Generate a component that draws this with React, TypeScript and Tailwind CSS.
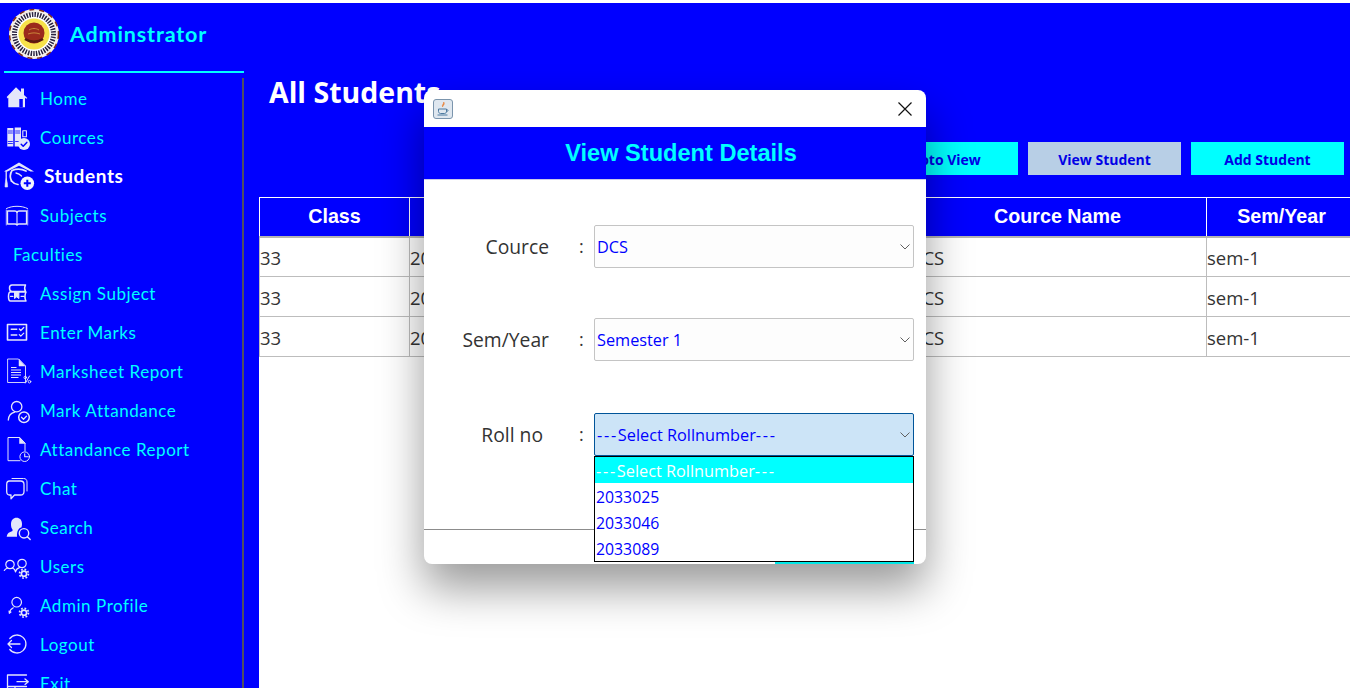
import React from "react";

const c = "#e4e6fb";
const B = "#0000ff";
const S = ({ children, w = 26, h = 26 }: { children: React.ReactNode; w?: number; h?: number }) => (
  <svg width={w} height={h} viewBox={`0 0 ${w} ${h}`} fill="none" stroke={c} strokeWidth={1.3} strokeLinecap="round" strokeLinejoin="round" className="shrink-0 overflow-visible">
    {children}
  </svg>
);
const Gear = ({ x, y }: { x: number; y: number }) => (
  <g>
    <circle cx={x} cy={y} r={2.6} strokeWidth={1.6} />
    <circle cx={x} cy={y} r={4.4} strokeDasharray="1.7 1.75" strokeWidth={1.8} strokeLinecap="butt" />
  </g>
);
const Home = () => (
  <S>
    <path d="M.7 11 10 1.300l5 4.700V2.500h3V9l3.300 3-1 .8-1.300-1V21.300H2.300V11.800l-.6.6z" fill={c} stroke="none" />
    <rect x={13.300} y={13} width={3.500} height={8.300} fill={B} stroke="none" />
  </S>
);
const Cources = () => (
  <S>
    <path d="M1.300 3h6v18.500h-6zM8.700 2.400h6.300V15l-2 6.500H8.700z" fill={c} stroke="none" />
    <path d="M1.800 6h5M1.800 8h5M1.800 16.500h5M1.800 18.500h5M9.200 6h5M9.200 8h5M9.200 16.500h4" stroke={B} strokeWidth={.8} strokeLinecap="butt" />
    <rect x={16.800} y={5.800} width={3.600} height={6} strokeWidth={1.100} />
    <circle cx={18} cy={19} r={6} fill={c} stroke="none" />
    <path d="m15.200 19.200 2 2 3.600-3.800" stroke={B} strokeWidth={1.500} />
  </S>
);
const Students = () => (
  <S w={30} h={30}>
    <path d="M0 9.500 15 .5l15 9h-3.500L15 3.800 3.500 9.500z" fill={c} stroke="none" />
    <path d="M2.200 9v10" strokeWidth={1.300} />
    <path d="M2.200 17c-.8 2.500-1.200 5-1.200 8h2.600c0-3-.4-5.500-1.400-8z" fill={c} strokeWidth={.6} />
    <path d="M7.500 19c-2-4-1-8 .5-10.500 5-2 9-2 14 .5" strokeWidth={1.700} />
    <path d="M7.500 19c1.500 2 3.500 3 6.500 3.500" strokeWidth={1.700} />
    <path d="M12 11c2 .5 4 1.500 5.500 3" strokeWidth={1.300} />
    <circle cx={23.300} cy={21.300} r={6.800} fill="#f2f3ff" stroke="none" />
    <path d="M23.300 17.800v7M19.800 21.300h7" stroke={B} strokeWidth={2} strokeLinecap="butt" />
  </S>
);
const Subjects = () => (
  <S>
    <path d="M1.500 8h7.500c1 0 1.700.6 2 1.500.3-.9 1-1.500 2-1.500h7.500v13H13c-1 0-1.700.3-2 1-.3-.7-1-1-2-1H1.500z" strokeWidth={1.300} />
    <path d="M11 9.500V22" strokeWidth={1.100} />
    <path d="M.5 5.500C6 2.500 16 2.500 21.500 5.500" strokeWidth={1} />
    <path d="M.3 7v15M21.700 7v15" strokeWidth={.8} />
  </S>
);
const Assign = () => (
  <S>
    <path d="M6 4h13.500M6 4C4 4 3.500 5.500 3.500 7S4 10.500 6 10.500h13.500M19.500 4c-1 1.800-1 4.500 0 6.500M4.500 11h15.500c-1.200 2.500-1.200 6.500 0 9M4.500 11c-1.500 0-2 1.800-2 4.500s.5 4.500 2 4.500h15.500" strokeWidth={1.500} />
    <path d="M8.500 10.500v7l2.200-1.700 2.200 1.700v-7" fill={c} strokeWidth={1} />
    <path d="M4.500 15.300h2.500M15 15.300h3" strokeWidth={1.200} />
  </S>
);
const Marks = () => (
  <S>
    <rect x={1.500} y={4.500} width={19} height={15.500} strokeWidth={1.600} />
    <path d="M4.700 9.300h6.600M4.700 15h6.600" strokeWidth={1.500} strokeLinecap="butt" />
    <path d="m13.300 9 1.500 1.500 3-3M13.300 14.700l1.500 1.500 3-3" strokeWidth={1.200} />
  </S>
);
const Sheet = () => (
  <S>
    <path d="M2 0h10.500l7 7v16.500H2z" strokeWidth={.9} />
    <path d="M13 .5V7h6z" fill={c} strokeWidth={.5} />
    <path d="M5 8.500h5.500M5 11h10M5 13.500h10M5 16h10M5 18.500h7.500" strokeWidth={1.100} strokeLinecap="butt" />
    <path d="m23.500 17-4 7" strokeWidth={1} />
    <circle cx={19.300} cy={18.500} r={1.300} strokeWidth={.9} />
    <circle cx={23.500} cy={22.700} r={1.300} strokeWidth={.9} />
  </S>
);
const Attend = () => (
  <S>
    <circle cx={10.700} cy={8.700} r={5.200} strokeWidth={1.300} />
    <path d="M2.300 22c.3-4.500 2.800-7 6.500-7.800" strokeWidth={1.300} />
    <circle cx={18} cy={19.300} r={5.300} strokeWidth={1.500} />
    <path d="m15.500 19.300 2 2 3-3.200" strokeWidth={1.300} />
  </S>
);
const Report = () => (
  <S>
    <path d="M14 23.700H2V.5h11.500L19 6v8" strokeWidth={1} />
    <path d="M13.500.5V6.500H19z" fill={c} strokeWidth={.5} />
    <circle cx={18.700} cy={19.700} r={4.800} strokeWidth={1} />
    <path d="M18.700 16.800v2.900h3.500" strokeWidth={1.100} />
  </S>
);
const Chat = () => (
  <S>
    <path d="M6 2.500h11.500c2.300 0 3.500 1.200 3.500 3.500v9" strokeWidth={1} />
    <path d="M3.500 5h11c2.300 0 3.500 1.200 3.500 3.500v7c0 2.300-1.200 3.500-3.500 3.500H8.500L5 22.800V19H3.500C1.700 19 .7 17.800.7 15.500v-7C.7 6.200 1.700 5 3.500 5z" strokeWidth={1.300} />
  </S>
);
const SearchI = () => (
  <S>
    <path d="M.7 21.700c.2-3 2.300-4.700 5.800-5.700v-1.500c-1-1-1.500-3-1.500-5C5 5 7.300 2.800 10.500 2.800S16 5 16 9c0 1-.1 1.800-.5 3.200-3 .9-4.800 4-4.500 9.500z" fill={c} stroke="none" />
    <circle cx={18} cy={18.300} r={4.700} strokeWidth={1.400} />
    <path d="m21.400 21.700 2.800 2.800" strokeWidth={1.400} />
  </S>
);
const Users = () => (
  <S>
    <circle cx={4} cy={10.500} r={4.200} strokeWidth={1.200} />
    <circle cx={16} cy={9.500} r={4.200} strokeWidth={1.200} />
    <path d="M-1.700 16.500c.6-1.300 1.800-2 3.300-2.500M6.500 14c1.500.5 2.600 1.800 3 4 .3-2 1.800-3.700 4-4.300" strokeWidth={1.200} />
    <Gear x={18} y={19.700} />
  </S>
);
const Admin = () => (
  <S>
    <circle cx={10.700} cy={9.200} r={4.800} strokeWidth={1.200} />
    <path d="M3.300 20.300c.5-2.800 1.800-4.500 4-5.500M3.300 20.300 3 18M3.300 20.300 5 19" strokeWidth={1.100} />
    <Gear x={18} y={19.700} />
  </S>
);
const Logout = () => (
  <S>
    <path d="M3.800 6.500A9 9 0 1 1 3.800 17.500" strokeWidth={1.300} />
    <path d="M2 12h12M5.500 8.500 2 12l3.500 3.500" strokeWidth={1.300} />
  </S>
);
const Exit = () => (
  <S>
    <path d="M20.500 4H1.500v14h12M1.500 15.500h19M9 15.500V20" strokeWidth={1.300} />
    <path d="M11 10.700h11M19 8l3.300 2.700-3.300 2.700" strokeWidth={1.300} />
  </S>
);

const menu: { label: string; icon: React.ReactNode }[] = [
  { label: "Home", icon: <Home /> },
  { label: "Cources", icon: <Cources /> },
];
const menu2: { label: string; icon: React.ReactNode }[] = [
  { label: "Assign Subject", icon: <Assign /> },
  { label: "Enter Marks", icon: <Marks /> },
  { label: "Marksheet Report", icon: <Sheet /> },
  { label: "Mark Attandance", icon: <Attend /> },
  { label: "Attandance Report", icon: <Report /> },
  { label: "Chat", icon: <Chat /> },
  { label: "Search", icon: <SearchI /> },
  { label: "Users", icon: <Users /> },
  { label: "Admin Profile", icon: <Admin /> },
  { label: "Logout", icon: <Logout /> },
  { label: "Exit", icon: <Exit /> },
];

const Item = ({ label, icon }: { label: string; icon: React.ReactNode }) => (
  <div className="flex h-[39px] shrink-0 items-center gap-2 pl-[6px] font-['Lato',sans-serif] text-[17px] tracking-[0.55px] text-[#00ffff]">
    <span className="flex w-[26px] shrink-0">{icon}</span>
    <span className="whitespace-nowrap">{label}</span>
  </div>
);

const Logo = () => (
  <svg width="52" height="52" viewBox="0 0 52 52" className="shrink-0">
    <circle cx="26" cy="26" r="25" fill="#f5efe6" />
    <circle cx="26" cy="26" r="24.500" fill="none" stroke="#7c2a1e" strokeWidth="1.500" strokeDasharray="5 5" />
    <circle cx="26" cy="26" r="22" fill="#fff" />
    <circle cx="26" cy="26" r="19.500" fill="none" stroke="#2b2440" strokeWidth="5" strokeDasharray="1.500 1.200" />
    <circle cx="26" cy="26" r="15.500" fill="#f7e24a" />
    <circle cx="26" cy="25" r="10.500" fill="#9b2a1c" />
    <path d="M17 31c5 3.500 13 3.500 18 0" stroke="#5a1a10" strokeWidth="2.500" fill="none" />
    <path d="M21 22c3-2 7-2 10 0M20 26c4-1.500 8-1.500 12 0" stroke="#c9843a" strokeWidth="1" fill="none" />
  </svg>
);

const JavaIcon = () => (
  <svg width="20" height="20" viewBox="0 0 20 20">
    <rect x="0.500" y="0.500" width="19" height="19" rx="2.500" fill="#dfe7ef" stroke="#7b95ad" />
    <path d="M10.500 3c1 1.500-2 2.500-1 5 .2-1.500 2.500-2.200 1.500-4.500z" fill="#e8833a" stroke="#e8833a" strokeWidth=".6" />
    <path d="M5.500 10h8v2.500c0 1-1 2-2 2h-4c-1 0-2-1-2-2zM13.500 10.500c2 0 2 2-.3 2.300M4.500 16h10" fill="none" stroke="#4d7aa0" strokeWidth="1" />
  </svg>
);

const Chevron = () => (
  <svg width="10" height="6" viewBox="0 0 10 6" className="shrink-0">
    <path d="M.5.500 5 5 9.500.500" fill="none" stroke="#606060" strokeWidth="1" />
  </svg>
);

const Dash = () => <span className="tracking-[1.7px]">---</span>;

const Combo = ({ label, value, active, pr }: { label: string; value: React.ReactNode; active?: boolean; pr: string }) => (
  <div className="flex h-[43px] items-center font-['Open_Sans',sans-serif]">
    <span className={`w-[125px] pt-[1px] text-right text-[19.300px] text-[#333] ${pr}`}>{label}</span>
    <span className="w-[45px] pl-[30px] text-[18px] text-[#333]">:</span>
    <div className={`flex h-full w-[320px] items-center justify-between rounded-[2px] border pl-[2px] pr-[3px] text-[16.300px] text-[#0000ff] ${active ? "border-[#005499] bg-[#cce4f7]" : "border-[#c4c4c4] bg-[#fdfdfd]"}`}>
      <span className="pt-[1px]">{value}</span>
      <Chevron />
    </div>
  </div>
);

const rows = ["2033025", "2033046", "2033089"];

export default function App() {
  return (
    <div className="relative flex h-[688px] w-[1350px] overflow-hidden bg-white pt-[3px]">
      <aside className="flex w-[259px] shrink-0 flex-col overflow-hidden bg-[#0000ff]">
        <div className="flex h-[68px] shrink-0 items-center gap-[10px] pb-[6px] pl-2">
          <Logo />
          <span className="font-['Lato',sans-serif] text-[21.500px] font-bold tracking-[0.85px] text-[#00ffff]">Adminstrator</span>
        </div>
        <div className="ml-1 h-[2px] w-[240px] shrink-0 bg-[#00ffff]" />
        <nav className="mt-[5px] flex w-[244px] flex-1 flex-col border-r-2 border-[#4f4f5f] pt-[1px]">
          {menu.map((m) => (
            <Item key={m.label} {...m} />
          ))}
          <div className="flex h-[39px] shrink-0 items-center gap-[10px] pl-1 font-['Lato',sans-serif] text-[19px] font-bold tracking-[0.6px] text-white">
            <Students />
            <span>Students</span>
          </div>
          <Item label="Subjects" icon={<Subjects />} />
          <div className="flex h-[39px] shrink-0 items-center pl-[13px] font-['Lato',sans-serif] text-[17px] tracking-[0.55px] text-[#00ffff]">Faculties</div>
          {menu2.map((m) => (
            <Item key={m.label} {...m} />
          ))}
        </nav>
      </aside>

      <main className="flex min-w-0 flex-1 flex-col">
        <div className="h-[194px] shrink-0 bg-[#0000ff] pl-[10px] pr-[6px] pt-[67px]">
          <h1 className="font-['Open_Sans',sans-serif] text-[28.500px] font-bold leading-[44px] text-white">All Students</h1>
          <div className="mt-[28px] flex justify-end gap-[10px] font-['Open_Sans',sans-serif] text-[14px] font-bold text-[#0000e6]">
            <button className="h-[33px] w-[153px] bg-[#00ffff] pt-[1px]">Photo View</button>
            <button className="h-[33px] w-[153px] bg-[#b8cfe6] pt-[1px]">View Student</button>
            <button className="h-[33px] w-[153px] bg-[#00ffff] pt-[1px]">Add Student</button>
          </div>
        </div>
        <table className="w-[1097px] shrink-0 table-fixed border-collapse">
          <colgroup>
            <col className="w-[150px]" />
            <col className="w-[250px]" />
            <col className="w-[249px]" />
            <col className="w-[298px]" />
            <col className="w-[150px]" />
          </colgroup>
          <thead>
            <tr className="h-[39px] border-t border-b-2 border-t-white border-b-[#b4b4b4] bg-[#0000ff] font-['Liberation_Sans',sans-serif] text-[19.700px] font-bold text-white">
              <th className="border-x border-white">Class</th>
              <th className="border-x border-white">Roll no</th>
              <th className="border-x border-white">Name</th>
              <th className="border-x border-white">Cource Name</th>
              <th className="border-x border-white">Sem/Year</th>
            </tr>
          </thead>
          <tbody className="font-['Open_Sans',sans-serif] text-[18.500px] text-[#333]">
            {rows.map((r) => (
              <tr key={r} className="h-[40px] border-b border-[#bdbdbd]">
                <td className="border-x border-[#bdbdbd] pt-[3px]">33</td>
                <td className="border-x border-[#bdbdbd] pt-[3px]">{r}</td>
                <td className="border-x border-[#bdbdbd]" />
                <td className="border-x border-[#bdbdbd] pt-[3px]">DCS</td>
                <td className="border-x border-[#bdbdbd] pt-[3px]">sem-1</td>
              </tr>
            ))}
          </tbody>
        </table>
      </main>

      <div className="absolute left-[424px] top-[90px] flex h-[474px] w-[502px] flex-col overflow-hidden rounded-lg bg-white shadow-[0_24px_45px_rgba(0,0,0,0.4)]">
        <div className="flex h-[37px] shrink-0 items-center justify-between pl-[9px] pr-[14px]">
          <JavaIcon />
          <svg width="14" height="14" viewBox="0 0 14 14">
            <path d="M.5.500l13 13M13.500.500l-13 13" stroke="#111" strokeWidth="1.200" />
          </svg>
        </div>
        <div className="flex h-[53px] shrink-0 items-center justify-center border-b border-[#c9c9e8] bg-[#0000ff] pl-[12px] pt-[2px] font-['Liberation_Sans',sans-serif] text-[23.600px] font-bold text-[#00ffff]">View Student Details</div>
        <div className="flex flex-1 flex-col pt-[45px]">
          <Combo label="Cource" value="DCS" pr="pr-0" />
          <div className="h-[50px]" />
          <Combo label="Sem/Year" value="Semester 1" pr="pr-0" />
          <div className="h-[52px]" />
          <Combo label="Roll no" value={<><Dash />Select Rollnumber<Dash /></>} active pr="pr-[6px]" />
          <div className="mt-[73px] flex flex-1 justify-end border-t border-[#8c8c8c] pr-[12px]">
            <div className="mt-[32px] h-[2px] w-[139px] bg-[#00e8e8]" />
          </div>
        </div>
        <div className="absolute left-[170px] top-[366px] h-[106px] w-[320px] border border-black bg-white font-['Open_Sans',sans-serif] text-[15.800px] leading-[26px] text-[#0000ff]">
          <div className="h-[26px] bg-[#00ffff] pl-[1px] pt-[1px] text-[16.300px] text-white"><Dash />Select Rollnumber<Dash /></div>
          {rows.map((r) => (
            <div key={r} className="h-[26px] pl-[1px] pt-[1px]">{r}</div>
          ))}
        </div>
      </div>
    </div>
  );
}
